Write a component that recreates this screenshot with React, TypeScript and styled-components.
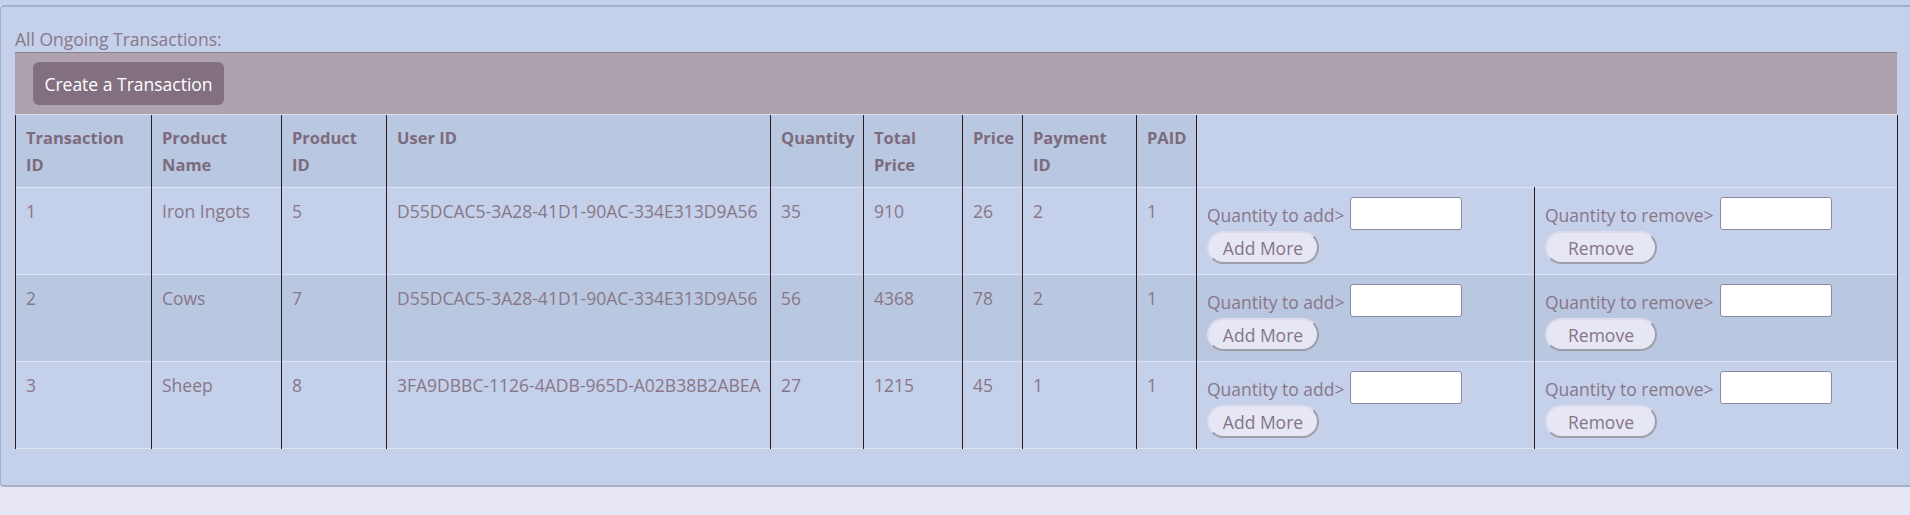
import styled, { createGlobalStyle } from "styled-components"

type Transaction = {
  id: number
  product: string
  productId: number
  userId: string
  quantity: number
  total: number
  price: number
  paymentId: number
  paid: number
}

const transactions: Transaction[] = [
  { id: 1, product: "Iron Ingots", productId: 5, userId: "D55DCAC5-3A28-41D1-90AC-334E313D9A56", quantity: 35, total: 910, price: 26, paymentId: 2, paid: 1 },
  { id: 2, product: "Cows", productId: 7, userId: "D55DCAC5-3A28-41D1-90AC-334E313D9A56", quantity: 56, total: 4368, price: 78, paymentId: 2, paid: 1 },
  { id: 3, product: "Sheep", productId: 8, userId: "3FA9DBBC-1126-4ADB-965D-A02B38B2ABEA", quantity: 27, total: 1215, price: 45, paymentId: 1, paid: 1 },
]

const headers = ["Transaction ID", "Product Name", "Product ID", "User ID", "Quantity", "Total Price", "Price", "Payment ID", "PAID"]
const widths = [136, 130, 105, 384, 93, 99, 60, 114, 60, 338, 363]

const App = () => (
  <Page>
    <GlobalStyle />
    <TopStrip />
    <Panel>
      <Caption>All Ongoing Transactions:</Caption>
      <Toolbar>
        <CreateButton>Create a Transaction</CreateButton>
      </Toolbar>
      <Table>
        <colgroup>
          {widths.map((w, i) => (
            <Col key={i} $w={w} />
          ))}
        </colgroup>
        <thead>
          <tr>
            {headers.map((h) => (
              <Th key={h}>{h}</Th>
            ))}
            <Th colSpan={2} $blank />
          </tr>
        </thead>
        <tbody>
          {transactions.map((t, i) => (
            <Row key={t.id} $alt={i % 2 === 1}>
              <Td>{t.id}</Td>
              <Td>{t.product}</Td>
              <Td>{t.productId}</Td>
              <Td>{t.userId}</Td>
              <Td>{t.quantity}</Td>
              <Td>{t.total}</Td>
              <Td>{t.price}</Td>
              <Td>{t.paymentId}</Td>
              <Td>{t.paid}</Td>
              <ActionTd>
                <Stack>
                  <Field>
                    <span>Quantity to add&gt;</span>
                    <QtyInput type="text" />
                  </Field>
                  <PillButton>Add More</PillButton>
                </Stack>
              </ActionTd>
              <ActionTd>
                <Stack>
                  <Field>
                    <span>Quantity to remove&gt;</span>
                    <QtyInput type="text" />
                  </Field>
                  <PillButton>Remove</PillButton>
                </Stack>
              </ActionTd>
            </Row>
          ))}
        </tbody>
      </Table>
    </Panel>
  </Page>
)

// Styled components
const GlobalStyle = createGlobalStyle`
  html, body {
    margin: 0;
    padding: 0;
    background: #e6e6f5;
    overflow: hidden;
  }
  body {
    font-family: "Segoe UI", "Open Sans", sans-serif;
    font-size: 17.5px;
    line-height: 27px;
    color: #877787;
  }
`

const Page = styled.div`
  min-height: 100vh;
  background: #e6e6f5;
`

const TopStrip = styled.div`
  height: 5px;
  background: #c5d0eb;
`

const Panel = styled.section`
  background: #c5d0eb;
  border-top: 2px solid #a5b0cb;
  border-bottom: 2px solid #a5b0cb;
  border-left: 1px solid #a5b0cb;
  border-radius: 4px 0 0 4px;
  padding: 18px 13px 36px 14px;
`

const Caption = styled.div`
  color: #887888;
  padding-top: 2px;
  line-height: 25px;
`

const Toolbar = styled.div`
  background: #aea2ae;
  border-top: 1px solid #8f7f8f;
  border-bottom: 1px solid #dcdfe9;
  padding: 9px 18px;
  display: flex;
`

const CreateButton = styled.button`
  height: 43px;
  width: 191px;
  border: none;
  border-radius: 6px;
  background: #826f80;
  color: #ffffff;
  font-family: inherit;
  font-size: 17.5px;
`

const Table = styled.table`
  width: 1882px;
  table-layout: fixed;
  border-collapse: collapse;
`

const Col = styled.col<{ $w: number }>`
  width: ${(p) => p.$w}px;
`

const Th = styled.th<{ $blank?: boolean }>`
  background: ${(p) => (p.$blank ? "#c5d0eb" : "#bac7e0")};
  color: #7c6b7c;
  font-weight: 700;
  font-size: 16.5px;
  text-align: left;
  vertical-align: top;
  padding: 9px 8px 9px 10px;
  border-left: 1px solid #2b1a1e;
  border-right: 1px solid #2b1a1e;
`

const Row = styled.tr<{ $alt: boolean }>`
  background: ${(p) => (p.$alt ? "#bac7e0" : "#c5d0eb")};
  border-top: 1px solid #dde3f0;
  &:last-child {
    border-bottom: 1px solid #dde3f0;
  }
`

const Td = styled.td`
  vertical-align: top;
  padding: 10px 10px;
  white-space: nowrap;
  border-left: 1px solid #2b1a1e;
  border-right: 1px solid #2b1a1e;
`

const ActionTd = styled(Td)`
  padding: 9px 10px 10px;
`

const Stack = styled.div`
  display: flex;
  flex-direction: column;
  align-items: flex-start;
  gap: 1px;
`

const Field = styled.div`
  display: flex;
  align-items: center;
  gap: 6px;
  padding-top: 3px;
  height: 30px;
`

const QtyInput = styled.input`
  box-sizing: border-box;
  width: 112px;
  height: 33px;
  margin-top: -3px;
  background: #ffffff;
  border: 1px solid #8b8aa0;
  border-radius: 3px;
`

const PillButton = styled.button`
  box-sizing: border-box;
  width: 112px;
  height: 33px;
  border-radius: 17px;
  border: 2px solid;
  border-color: #dcdcec #9e9ea8 #9e9ea8 #dcdcec;
  background: #e6e6f5;
  color: #857585;
  font-family: inherit;
  font-size: 17.5px;
  padding: 0;
`

export default App
